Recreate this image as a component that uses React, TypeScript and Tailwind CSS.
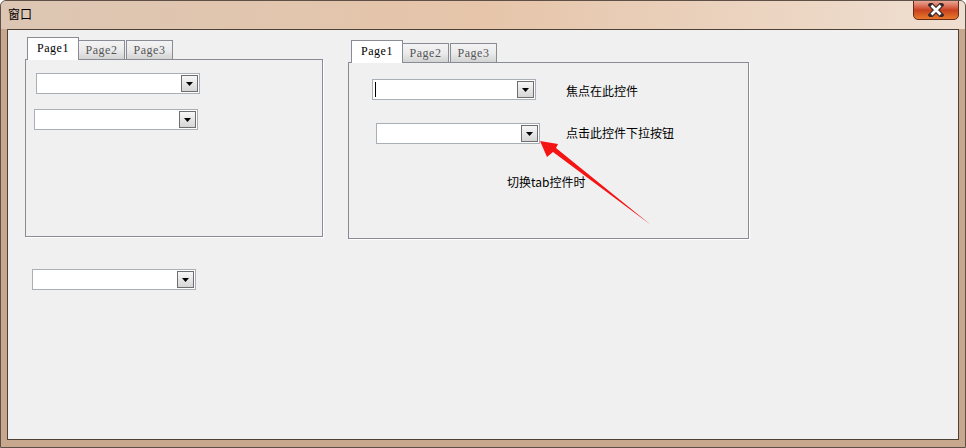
import React from 'react';

const cjk = { fontFamily: '"Noto Sans CJK SC", "Noto Sans", sans-serif' };
const serif = { fontFamily: '"Liberation Serif", "Noto Sans CJK SC", serif' };

function Combo({ className = '', caret = false }: { className?: string; caret?: boolean }) {
  return (
    <div
      className={`w-[164px] h-[21px] bg-white border border-[#a9afb7] flex items-center pr-[1px] ${className}`}
    >
      <div className="flex-1 pl-[2px] flex items-center">
        {caret && <div className="w-[1px] h-[15px] bg-black" />}
      </div>
      <div className="w-[17px] h-[17px] border border-[#6e6e6e] bg-gradient-to-b from-[#f7f7f7] to-[#d6d6d6] flex items-center justify-center">
        <svg width="7" height="4" viewBox="0 0 7 4">
          <path d="M0 0 H7 L3.5 4 Z" fill="#000" />
        </svg>
      </div>
    </div>
  );
}

function TabCtl({
  width,
  height,
  padLeft,
  children,
}: {
  width: number;
  height: number;
  padLeft: string;
  children: React.ReactNode;
}) {
  return (
    <div className="flex flex-col" style={{ width }}>
      {/* tabs */}
      <div className={`h-[21px] flex items-end ${padLeft}`} style={serif}>
        <div className="relative z-10 -mb-[1px] h-[23px] w-[52px] bg-white border border-b-0 border-[#898c95] text-[12px] tracking-[0.5px] text-black flex items-center justify-center pb-[2px]">
          Page1
        </div>
        <div className="h-[19px] w-[46px] border border-l-0 border-b-0 border-[#898c95] bg-gradient-to-b from-[#f3f3f3] via-[#ebebeb] to-[#d3d3d3] text-[12px] tracking-[0.5px] text-[#555] flex items-center justify-center">
          Page2
        </div>
        <div className="ml-[1px] h-[19px] w-[47px] border border-b-0 border-[#898c95] bg-gradient-to-b from-[#f3f3f3] via-[#ebebeb] to-[#d3d3d3] text-[12px] tracking-[0.5px] text-[#555] flex items-center justify-center">
          Page3
        </div>
      </div>
      {/* panel */}
      <div
        className="border border-[#898c95] bg-[#f0f0f0] shadow-[1px_1px_0_#ffffff] flex flex-col"
        style={{ height }}
      >
        {children}
      </div>
    </div>
  );
}

export default function App() {
  return (
    <div className="relative w-[966px] h-[448px] overflow-hidden flex flex-col bg-[#c7a88f] rounded-t-[6px] border border-[#5e5046]">
      {/* Title bar */}
      <div className="h-[28px] flex items-start justify-between bg-gradient-to-r from-[#dcc6b3] via-[#e6c5aa] to-[#efdfd1]">
        <span className="pl-[7px] pt-[5px] text-[12px] text-black leading-[16px]" style={cjk}>
          窗口
        </span>
        <div className="mr-[6px] -mt-[1px] w-[46px] h-[20px] rounded-b-[5px] border border-[#6a2a1a] bg-gradient-to-b from-[#e9a595] via-[#c9401f] to-[#e8782a] flex items-center justify-center">
          <svg width="16" height="14" viewBox="0 0 16 14">
            <path d="M3 2 L13 12 M13 2 L3 12" stroke="#3b2a2a" strokeWidth="5" strokeLinecap="square" />
            <path d="M3.5 2.5 L12.5 11.5 M12.5 2.5 L3.5 11.5" stroke="#ffffff" strokeWidth="2.6" />
          </svg>
        </div>
      </div>

      {/* Client */}
      <div className="flex-1 px-[6px] pb-[7px] flex">
        <div className="flex-1 border border-[#4d4136] bg-[#f0f0f0] flex flex-col">
          <div className="flex items-start">
            <div className="ml-[17px] mt-[8px]">
              <TabCtl width={298} height={178} padLeft="pl-[2px]">
                <Combo className="ml-[10px] mt-[13px]" />
                <Combo className="ml-[8px] mt-[15px]" />
              </TabCtl>
            </div>
            <div className="ml-[25px] mt-[11px]">
              <TabCtl width={401} height={177} padLeft="pl-[3px]">
                <div className="flex items-center mt-[16px]">
                  <Combo className="ml-[23px]" caret />
                  <span className="ml-[30px] mt-[3px] text-[12px] text-black" style={cjk}>
                    焦点在此控件
                  </span>
                </div>
                <div className="flex items-center mt-[23px]">
                  <Combo className="ml-[27px]" />
                  <span className="ml-[26px] -mt-[2px] text-[12px] text-black" style={cjk}>
                    点击此控件下拉按钮
                  </span>
                </div>
                <div className="mt-[29px] pl-[158px] text-[12px] leading-[18px] text-black" style={cjk}>
                  切换tab控件时
                </div>
              </TabCtl>
            </div>
          </div>
          <Combo className="ml-[24px] mt-[30px]" />
        </div>
      </div>

      {/* red arrow annotation */}
      <svg className="absolute -left-[1px] -top-[1px] pointer-events-none" width="966" height="448">
        <polygon
          points="540,141 547,157 553,152 651,225 556,148 558,144"
          fill="#f41414"
        />
      </svg>
    </div>
  );
}
